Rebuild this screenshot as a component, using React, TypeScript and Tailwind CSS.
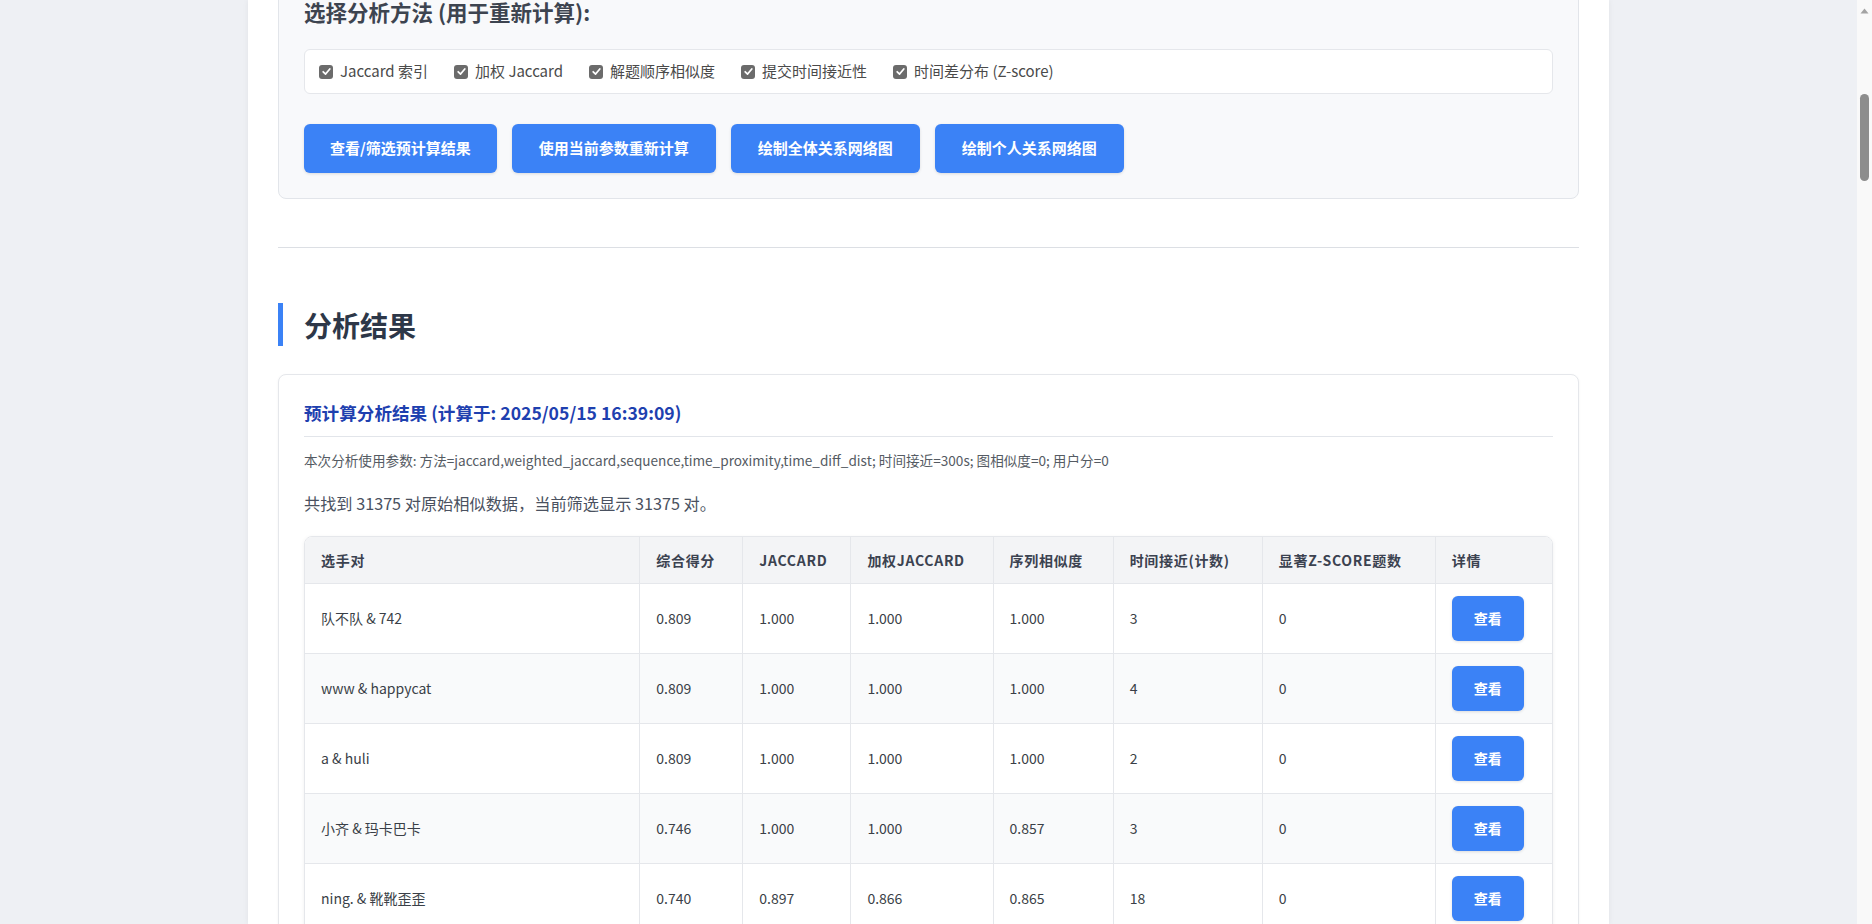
import React from "react";

const methods = ["Jaccard 索引", "加权 Jaccard", "解题顺序相似度", "提交时间接近性", "时间差分布 (Z-score)"];
const actions = ["查看/筛选预计算结果", "使用当前参数重新计算", "绘制全体关系网络图", "绘制个人关系网络图"];

const headers = ["选手对", "综合得分", "Jaccard", "加权Jaccard", "序列相似度", "时间接近(计数)", "显著Z-score题数", "详情"];
const colW = ["w-[335px]", "w-[103px]", "w-[108px]", "w-[142px]", "w-[120px]", "w-[149px]", "w-[173px]", "w-[116px]"];

const rows: string[][] = [
  ["队不队 & 742", "0.809", "1.000", "1.000", "1.000", "3", "0"],
  ["www & happycat", "0.809", "1.000", "1.000", "1.000", "4", "0"],
  ["a & huli", "0.809", "1.000", "1.000", "1.000", "2", "0"],
  ["小齐 & 玛卡巴卡", "0.746", "1.000", "1.000", "0.857", "3", "0"],
  ["ning. & 靴靴歪歪", "0.740", "0.897", "0.866", "0.865", "18", "0"],
  ["abc & def", "0.731", "0.889", "0.861", "0.850", "5", "0"],
];

function CheckBox() {
  return (
    <span className="flex h-[14px] w-[14px] shrink-0 items-center justify-center rounded-[3px] bg-[#6b6b6b]">
      <svg viewBox="0 0 12 12" className="h-[11px] w-[11px]">
        <path d="M2.4 6.3 L5 8.8 L9.6 3.2" fill="none" stroke="white" strokeWidth="1.9" strokeLinecap="round" strokeLinejoin="round" />
      </svg>
    </span>
  );
}

export default function App() {
  return (
    <div className="flex h-[924px] w-full overflow-hidden bg-[#eef0f4] font-['Noto_Sans_CJK_SC','Noto_Sans',sans-serif]">
      <div className="min-w-0 flex-1">
        <div className="mx-auto flex h-full w-[1361px] flex-col bg-white px-[30px] shadow-[0_0_6px_rgba(0,0,0,0.06)]">
          <div className="-mt-[28px] flex flex-col">
            {/* method card */}
            <div className="rounded-lg border border-[#e2e5ea] bg-[#f8f9fb] p-[25px]">
              <h3 className="text-[21.5px] font-bold leading-[28px] text-[#3d4450]">选择分析方法 (用于重新计算):</h3>
              <div className="mt-[23px] flex h-[45px] items-center gap-[26px] rounded-md border border-[#e5e7eb] bg-white pl-[14px]">
                {methods.map((m) => (
                  <label key={m} className="flex items-center gap-[7px] text-[15px] text-[#4a4a4a]">
                    <CheckBox />
                    <span>{m}</span>
                  </label>
                ))}
              </div>
              <div className="mt-[30px] flex gap-[15px]">
                {actions.map((a, i) => (
                  <button
                    key={a}
                    className={`h-[49px] rounded-md bg-[#3b82f6] text-[15px] font-bold text-white shadow-[0_1px_3px_rgba(0,0,0,0.12)] ${
                      i === 0 ? "px-[26px]" : "px-[27px]"
                    }`}
                  >
                    {a}
                  </button>
                ))}
              </div>
            </div>

            <div className="mt-[48px] h-px bg-[#dcdfe4]" />

            <h2 className="mt-[55px] flex h-[43px] items-center border-l-[5px] border-[#3b82f6] pl-[21px] text-[28px] font-bold text-[#2d3748]">
              分析结果
            </h2>

            {/* results card */}
            <div className="mt-[28px] rounded-lg border border-[#e5e7eb] bg-white p-[25px] shadow-[0_1px_3px_rgba(0,0,0,0.05)]">
              <h4 className="border-b border-[#e2e5ea] pb-[10px] text-[17.6px] font-bold leading-[26px] text-[#1e40af]">
                预计算分析结果 (计算于: 2025/05/15 16:39:09)
              </h4>
              <p className="mt-[13px] text-[13.6px] leading-[20px] text-[#555b63]">
                本次分析使用参数: 方法=jaccard,weighted_jaccard,sequence,time_proximity,time_diff_dist; 时间接近=300s; 图相似度=0; 用户分=0
              </p>
              <p className="mt-[21px] text-[16.2px] leading-[24px] text-[#4a5160]">共找到 31375 对原始相似数据，当前筛选显示 31375 对。</p>

              <div className="mt-[21px] overflow-hidden rounded-lg border border-[#e5e7eb] shadow-[0_1px_4px_rgba(0,0,0,0.06)]">
                <table className="w-full table-fixed border-separate border-spacing-0">
                  <colgroup>
                    {colW.map((w, i) => (
                      <col key={i} className={w} />
                    ))}
                  </colgroup>
                  <thead>
                    <tr className="bg-[#f3f4f6]">
                      {headers.map((h, i) => (
                        <th
                          key={h}
                          className={`h-[47px] border-b border-[#e5e7eb] px-[16px] text-left text-[14px] font-bold uppercase tracking-[0.05em] text-[#3b4250] ${
                            i < headers.length - 1 ? "border-r" : ""
                          }`}
                        >
                          {h}
                        </th>
                      ))}
                    </tr>
                  </thead>
                  <tbody>
                    {rows.map((r, ri) => (
                      <tr key={ri} className={ri % 2 === 1 ? "bg-[#f9fafb]" : "bg-white"}>
                        {r.map((c, ci) => (
                          <td key={ci} className="h-[70px] border-r border-b border-[#e5e7eb] px-[16px] text-[14px] text-[#3a3f47]">
                            {c}
                          </td>
                        ))}
                        <td className="h-[70px] border-b border-[#e5e7eb] px-[16px]">
                          <button className="h-[45px] w-[72px] rounded-md bg-[#3b82f6] text-[14px] font-bold text-white shadow-[0_1px_3px_rgba(0,0,0,0.12)]">
                            查看
                          </button>
                        </td>
                      </tr>
                    ))}
                  </tbody>
                </table>
              </div>
            </div>
          </div>
        </div>
      </div>

      {/* scrollbar */}
      <div className="flex w-[15px] shrink-0 flex-col items-center bg-[#f9f9f9]">
        <svg className="mt-[8px]" width="9" height="6" viewBox="0 0 9 6">
          <path d="M0.5 5.5 L4.5 0.5 L8.5 5.5 Z" fill="#a3a3a3" />
        </svg>
        <div className="mt-[80px] h-[87px] w-[9px] rounded-full bg-[#8d8d8d]" />
      </div>
    </div>
  );
}
